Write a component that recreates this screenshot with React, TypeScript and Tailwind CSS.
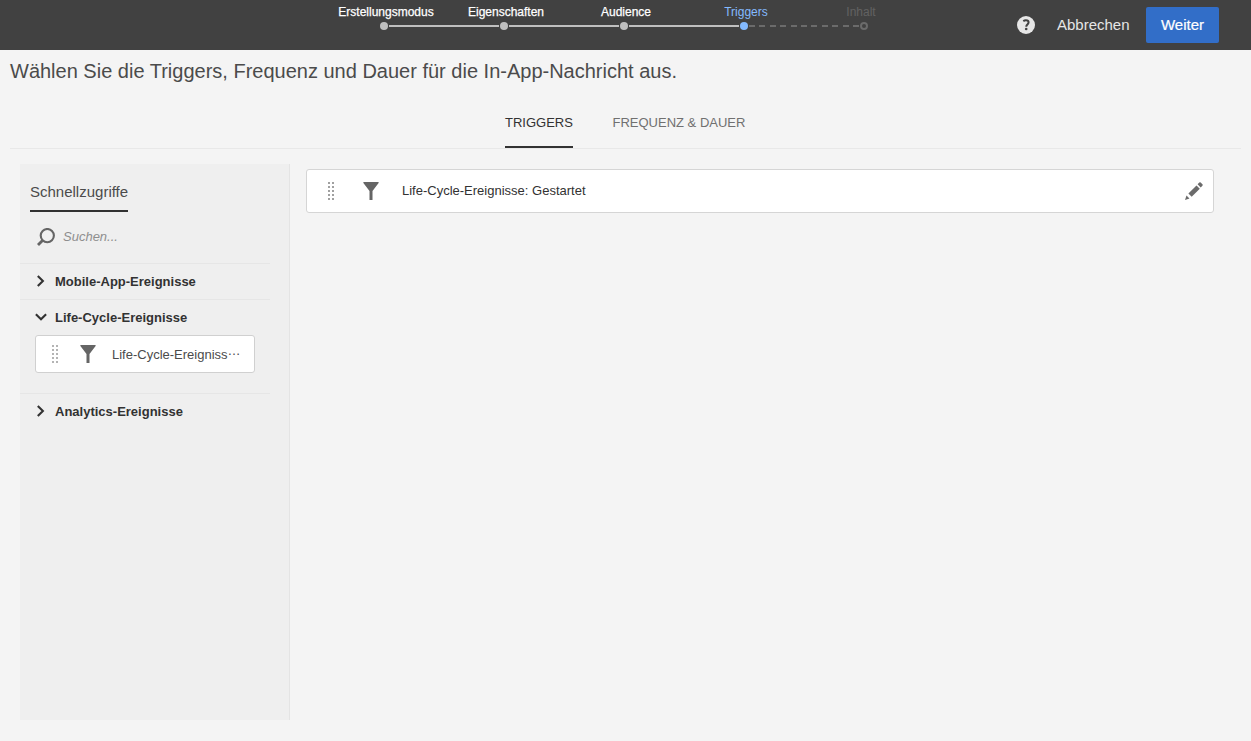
import type { ReactNode } from 'react';

function Grip({ className }: { className: string }) {
  return (
    <svg width="7" height="18" viewBox="0 0 7 18" shapeRendering="crispEdges" className={className}>
      {[0, 4, 8, 12, 16].map((y) => (
        <g key={y} fill="currentColor">
          <rect x="0" y={y} width="2" height="2" />
          <rect x="4" y={y} width="2" height="2" />
        </g>
      ))}
    </svg>
  );
}

function Funnel() {
  return (
    <svg width="16" height="18" viewBox="0 0 16 18" className="shrink-0">
      <path d="M.4 0h15.2v1L9.5 9v9h-3V9L.4 1z" fill="#656565" />
    </svg>
  );
}

function Chevron({ open }: { open?: boolean }) {
  return (
    <svg width="12" height="12" viewBox="0 0 12 12" fill="none" stroke="#323232" strokeWidth="2.1" className="mb-0.5 shrink-0">
      <path d={open ? 'M.9 3.2 6 8.3l5.1-5.1' : 'M2.8.9 7.9 6l-5.1 5.1'} />
    </svg>
  );
}

function Section({ label, open, children }: { label: string; open?: boolean; children?: ReactNode }) {
  return (
    <div className="w-[250px] border-t border-[#e6e6e6]">
      <div className="flex h-[35px] items-center pl-[15px]">
        <Chevron open={open} />
        <span className="ml-2 text-[13px] font-bold text-[#323232]">{label}</span>
      </div>
      {children}
    </div>
  );
}

const steps = [
  { label: 'Erstellungsmodus', text: 'text-white [-webkit-text-stroke:0.25px_white]', dot: 'bg-[#bfbfbf]', line: 'bg-[#bfbfbf]' },
  { label: 'Eigenschaften', text: 'text-white [-webkit-text-stroke:0.25px_white]', dot: 'bg-[#bfbfbf]', line: 'bg-[#bfbfbf]' },
  { label: 'Audience', text: 'text-white [-webkit-text-stroke:0.25px_white]', dot: 'bg-[#bfbfbf]', line: 'bg-[#bfbfbf]' },
  {
    label: 'Triggers',
    text: 'text-[#84baff]',
    dot: 'bg-[#84baff]',
    line: 'bg-[repeating-linear-gradient(90deg,#6b6b6b_0px,#6b6b6b_6px,transparent_6px,transparent_10.4px)]',
  },
  { label: 'Inhalt', text: 'text-[#616161] pr-2.5', dot: 'border-2 border-[#6b6b6b]', line: '' },
];

export default function App() {
  return (
    <div className="flex h-[741px] w-[1251px] flex-col overflow-hidden bg-[#f4f4f4] font-['Liberation_Sans',Arial,sans-serif]">
      <header className="flex h-[50px] shrink-0 items-start bg-[#414141] pl-[324px] pr-8">
        <div className="w-[600px] pt-1">
          <div className="flex">
            {steps.map((s) => (
              <div key={s.label} className={`h-4 w-[120px] shrink-0 pl-1 text-center text-[12px] leading-4 ${s.text}`}>
                {s.label}
              </div>
            ))}
          </div>
          <div className="mt-0.5 flex items-center pl-14">
            {steps.map((s) => (
              <div key={s.label} className="flex items-center">
                <span className={`size-2 rounded-full ${s.dot}`} />
                {s.line && <span className={`mx-px h-0.5 w-[110px] ${s.line}`} />}
              </div>
            ))}
          </div>
        </div>
        <div className="ml-auto flex items-center pt-[7px]">
          <svg width="18" height="18" viewBox="0 0 18 18">
            <circle cx="9" cy="9" r="9" fill="#e6e6e6" />
            <path d="M6.3 5.1c.8-.6 1.6-.9 2.6-.9 1.600 0 2.700.8 2.700 2.100 0 1.900-2.300 2.300-2.300 4.100v.3" fill="none" stroke="#414141" strokeWidth="2" />
            <circle cx="9.200" cy="13" r="1.300" fill="#414141" />
          </svg>
          <span className="ml-[22px] w-[73px] whitespace-nowrap text-[15px] text-[#e6e6e6]">Abbrechen</span>
          <button className="ml-4 h-9 w-[73px] rounded-[2px] bg-[#326ec8] text-[15px] text-white [-webkit-text-stroke:0.2px_white]">
            Weiter
          </button>
        </div>
      </header>

      <h1 className="h-[42px] shrink-0 whitespace-nowrap pl-2.5 text-[20px] leading-[42px] text-[#4b4b4b]">
        Wählen Sie die Triggers, Frequenz und Dauer für die In-App-Nachricht aus.
      </h1>

      <nav className="mx-2.5 flex h-[57px] shrink-0 items-start border-b border-[#e8e8e8] pl-[495px] pt-1">
        <span className="h-[52px] w-[68px] whitespace-nowrap border-b-2 border-[#323232] text-[13px] leading-[54px] text-[#323232]">
          TRIGGERS
        </span>
        <span className="ml-[39.5px] whitespace-nowrap text-[13px] leading-[54px] text-[#707070]">FREQUENZ &amp; DAUER</span>
      </nav>

      <main className="flex items-start pl-5 pt-[15px]">
        <aside className="h-[556px] w-[270px] shrink-0 border-r border-[#e4e4e4] bg-[#efefef]">
          <div className="flex pl-2.5 pt-2">
            <h2 className="h-10 w-[98px] whitespace-nowrap border-b-2 border-[#323232] text-[15px] leading-[39px] text-[#4b4b4b]">
              Schnellzugriffe
            </h2>
          </div>
          <div className="flex h-[51px] items-center pb-0.5 pl-[17px]">
            <svg width="18" height="18" viewBox="0 0 18 18" fill="none" stroke="#656565" className="shrink-0">
              <circle cx="10.300" cy="7.600" r="6.600" strokeWidth="2.100" />
              <path d="M6 12 1 17" strokeWidth="2.800" />
            </svg>
            <span className="ml-2 text-[13px] italic text-[#8e8e8e]">Suchen...</span>
          </div>
          <Section label="Mobile-App-Ereignisse" />
          <Section label="Life-Cycle-Ereignisse" open>
            <div className="mb-5 ml-[15px] flex h-[38px] w-[220px] items-center rounded-[3px] border border-[#d0d0d0] bg-white pl-4">
              <Grip className="shrink-0 text-[#b4b4b4]" />
              <span className="ml-[21px] flex">
                <Funnel />
              </span>
              <span className="ml-4 flex items-center whitespace-nowrap text-[13px] leading-4 text-[#4b4b4b]">
                <span className="pt-px">Life-Cycle-Ereigniss</span>
                <span className="pb-1.5">…</span>
              </span>
            </div>
          </Section>
          <Section label="Analytics-Ereignisse" />
        </aside>
        <section className="ml-4 mt-[5px] flex h-11 w-[908px] items-center rounded-[3px] border border-[#d5d5d5] bg-white pl-[21px] pr-2.5">
          <Grip className="text-[#a0a0a0]" />
          <span className="ml-7 flex">
            <Funnel />
          </span>
          <span className="ml-[23px] text-[13px] text-[#323232]">Life-Cycle-Ereignisse: Gestartet</span>
          <svg width="18" height="18" viewBox="0 0 18 18" fill="#6b6b6b" className="ml-auto">
            <path d="m0 18 1.500-4.500 3 3zM3.400 11.500l8.100-8.100 3.300 3.300-8.100 8.100zM12.600 2.300 14.300.6q.7-.7 1.400 0l1.700 1.700q.7.700 0 1.400l-1.700 1.700z" />
          </svg>
        </section>
      </main>
    </div>
  );
}
